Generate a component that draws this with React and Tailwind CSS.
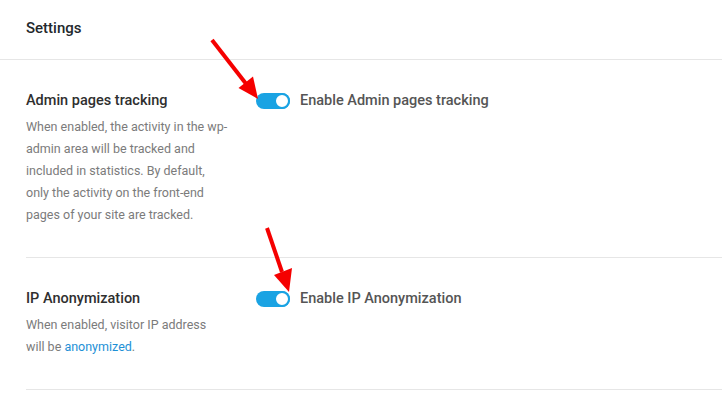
import React from "react";

function Toggle() {
  return (
    <div className="relative h-[16px] w-[34px] shrink-0 rounded-full bg-[#1aa3e3]">
      <div className="absolute right-0 top-0 h-[16px] w-[16px] rounded-full border-2 border-[#1aa3e3] bg-white" />
    </div>
  );
}

function Row({ title, desc, label, className }) {
  return (
    <div className={"ml-[26px] flex border-b border-[#e6e6e6] " + className}>
      <div className="w-[230px] shrink-0">
        <div className="text-[14.5px] leading-[22px] font-medium text-[#2f2f2f]">{title}</div>
        <div className="mt-[4px] text-[12.5px] leading-[22px] text-[#7b7b7b] whitespace-nowrap">{desc}</div>
      </div>
      <div className="flex h-[22px] items-center gap-[10px]">
        <Toggle />
        <span className="text-[14.5px] font-medium text-[#555]">{label}</span>
      </div>
    </div>
  );
}

export default function App() {
  return (
    <div className="relative h-[393px] w-[722px] overflow-hidden bg-white font-['Roboto',sans-serif]">
      <div className="flex h-[60px] items-center border-b border-[#e6e6e6] pl-[26px] pb-[3px]">
        <span className="text-[15px] font-medium text-[#23282d]">Settings</span>
      </div>
      <Row
        className="pt-[30px] pb-[31px]"
        title="Admin pages tracking"
        label="Enable Admin pages tracking"
        desc={
          <>
            When enabled, the activity in the wp-
            <br />
            admin area will be tracked and
            <br />
            included in statistics. By default,
            <br />
            only the activity on the front-end
            <br />
            pages of your site are tracked.
          </>
        }
      />
      <Row
        className="pt-[30px] pb-[31px]"
        title="IP Anonymization"
        label="Enable IP Anonymization"
        desc={
          <>
            When enabled, visitor IP address
            <br />
            will be <span className="text-[#1e90d6]">anonymized</span>.
          </>
        }
      />
      <svg className="pointer-events-none absolute left-0 top-0" width="722" height="393">
        <line x1="212" y1="40" x2="247" y2="85" stroke="#f50000" strokeWidth="4" />
        <polygon points="258,99 238.5,88 253,76.5" fill="#f50000" />
        <line x1="267" y1="228" x2="282" y2="272" stroke="#f50000" strokeWidth="4" />
        <polygon points="289,292 274,275 292,268" fill="#f50000" />
      </svg>
    </div>
  );
}
